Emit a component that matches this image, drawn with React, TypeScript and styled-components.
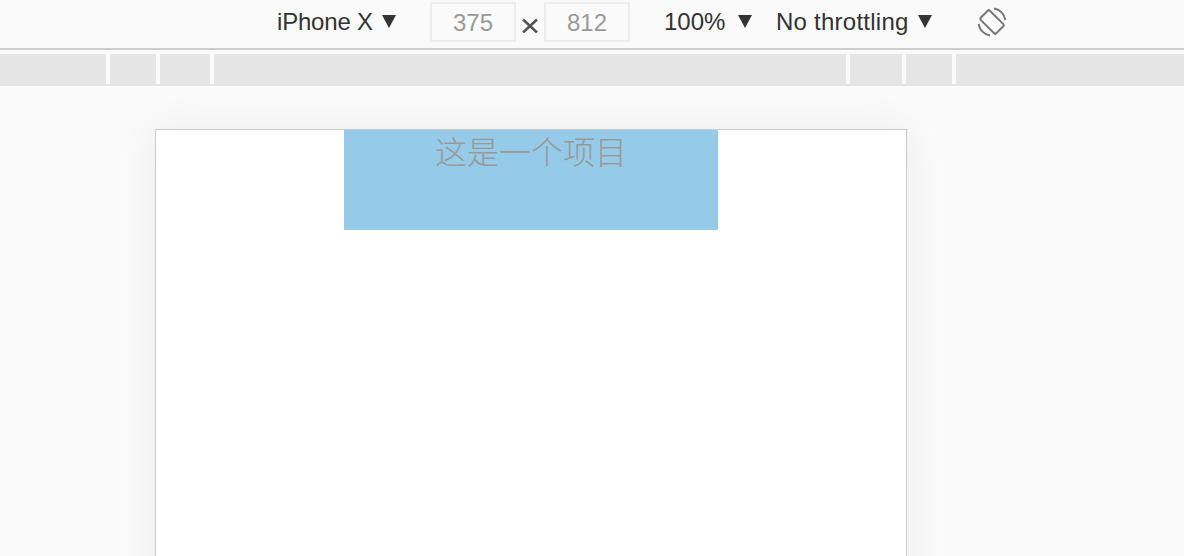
import styled, { createGlobalStyle } from "styled-components";

const GlobalStyle = createGlobalStyle`
  html, body {
    background-color: #fafafa;
    height: 100%;
    margin: 0;
    overflow: hidden;
  }

  body {
    font-family: "Liberation Sans", "Noto Sans CJK SC", sans-serif;
  }
`;

const Page = styled.div`
  display: flex;
  flex-direction: column;
  height: 556px;
  overflow: hidden;
`;

const Toolbar = styled.div`
  align-items: center;
  border-bottom: 2px solid #cdcdcd;
  box-sizing: border-box;
  color: #333;
  display: flex;
  flex: none;
  font-size: 24px;
  height: 50px;
  padding: 0 0 4px 277px;
`;

const Picker = styled.div<{ $width: number; $gap: number; $tracking?: number }>`
  align-items: center;
  display: flex;
  justify-content: space-between;
  letter-spacing: ${({ $tracking }) => $tracking ?? 0}px;
  margin-left: ${({ $gap }) => $gap}px;
  width: ${({ $width }) => $width}px;
`;

const Caret = styled.span`
  border-left: 7px solid transparent;
  border-right: 7px solid transparent;
  border-top: 13px solid #333;
  height: 0;
  margin-top: -1px;
  width: 0;
`;

const SizeInput = styled.div<{ $gap?: number }>`
  border: 2px solid #ededed;
  box-sizing: border-box;
  color: #999;
  height: 40px;
  line-height: 37px;
  margin-left: ${({ $gap }) => $gap ?? 0}px;
  text-align: center;
  width: 86px;
`;

const Times = styled.span`
  display: flex;
  justify-content: center;
  margin-top: 6px;
  width: 28px;
`;

const MediaBar = styled.div`
  border-bottom: 2px solid #e5e5e5;
  display: grid;
  flex: none;
  gap: 4px;
  grid-template-columns: 106px 46px 50px 632px 52px 46px 1fr;
  height: 30px;
  margin-top: 4px;
`;

const MediaCell = styled.div`
  background-color: #e5e5e5;
`;

const Stage = styled.div`
  display: flex;
  flex: 1;
  min-height: 0;
  padding: 43px 0 0 155px;
`;

const Device = styled.div`
  background-color: #fff;
  border: 1px solid #ccc;
  box-shadow: 0 0 40px rgba(0, 0, 0, 0.06);
  display: flex;
  height: 900px;
  justify-content: center;
  width: 750px;
`;

const Item = styled.div`
  background-color: #95cbe9;
  color: #999;
  font-size: 32px;
  font-weight: 300;
  height: 100px;
  line-height: 46px;
  text-align: center;
  width: 374px;
`;

const RotateIcon = styled.svg`
  flex: none;
  margin-left: 45px;
`;

const MEDIA_CELLS = ["a", "b", "c", "d", "e", "f", "g"];

const App = () => {
  return (
    <Page>
      <GlobalStyle />
      <Toolbar>
        <Picker $width={119} $gap={0} $tracking={-0.2}>
          iPhone X <Caret />
        </Picker>
        <SizeInput $gap={34}>375</SizeInput>
        <Times>
          <svg width="16" height="16" viewBox="0 0 16 16">
            <path d="M1 2.5l14 13M15 2.5l-14 13" stroke="#555" strokeWidth="2.6" fill="none" />
          </svg>
        </Times>
        <SizeInput>812</SizeInput>
        <Picker $width={88} $gap={34}>
          100% <Caret />
        </Picker>
        <Picker $width={156} $gap={24} $tracking={0.25}>
          No throttling <Caret />
        </Picker>
        <RotateIcon width="30" height="30" viewBox="0 0 30 30">
          <rect
            x="8.5"
            y="4"
            width="13"
            height="22"
            rx="1.5"
            transform="rotate(-45 15 15)"
            fill="none"
            stroke="#777"
            strokeWidth="2"
          />
          <path d="M17 1.6A13.5 13.5 0 0 1 28.4 13M13 28.4A13.5 13.5 0 0 1 1.6 17" fill="none" stroke="#777" strokeWidth="2" />
        </RotateIcon>
      </Toolbar>
      <MediaBar>
        {MEDIA_CELLS.map((id) => (
          <MediaCell key={id} />
        ))}
      </MediaBar>
      <Stage>
        <Device>
          <Item>这是一个项目</Item>
        </Device>
      </Stage>
    </Page>
  );
};

export default App;
